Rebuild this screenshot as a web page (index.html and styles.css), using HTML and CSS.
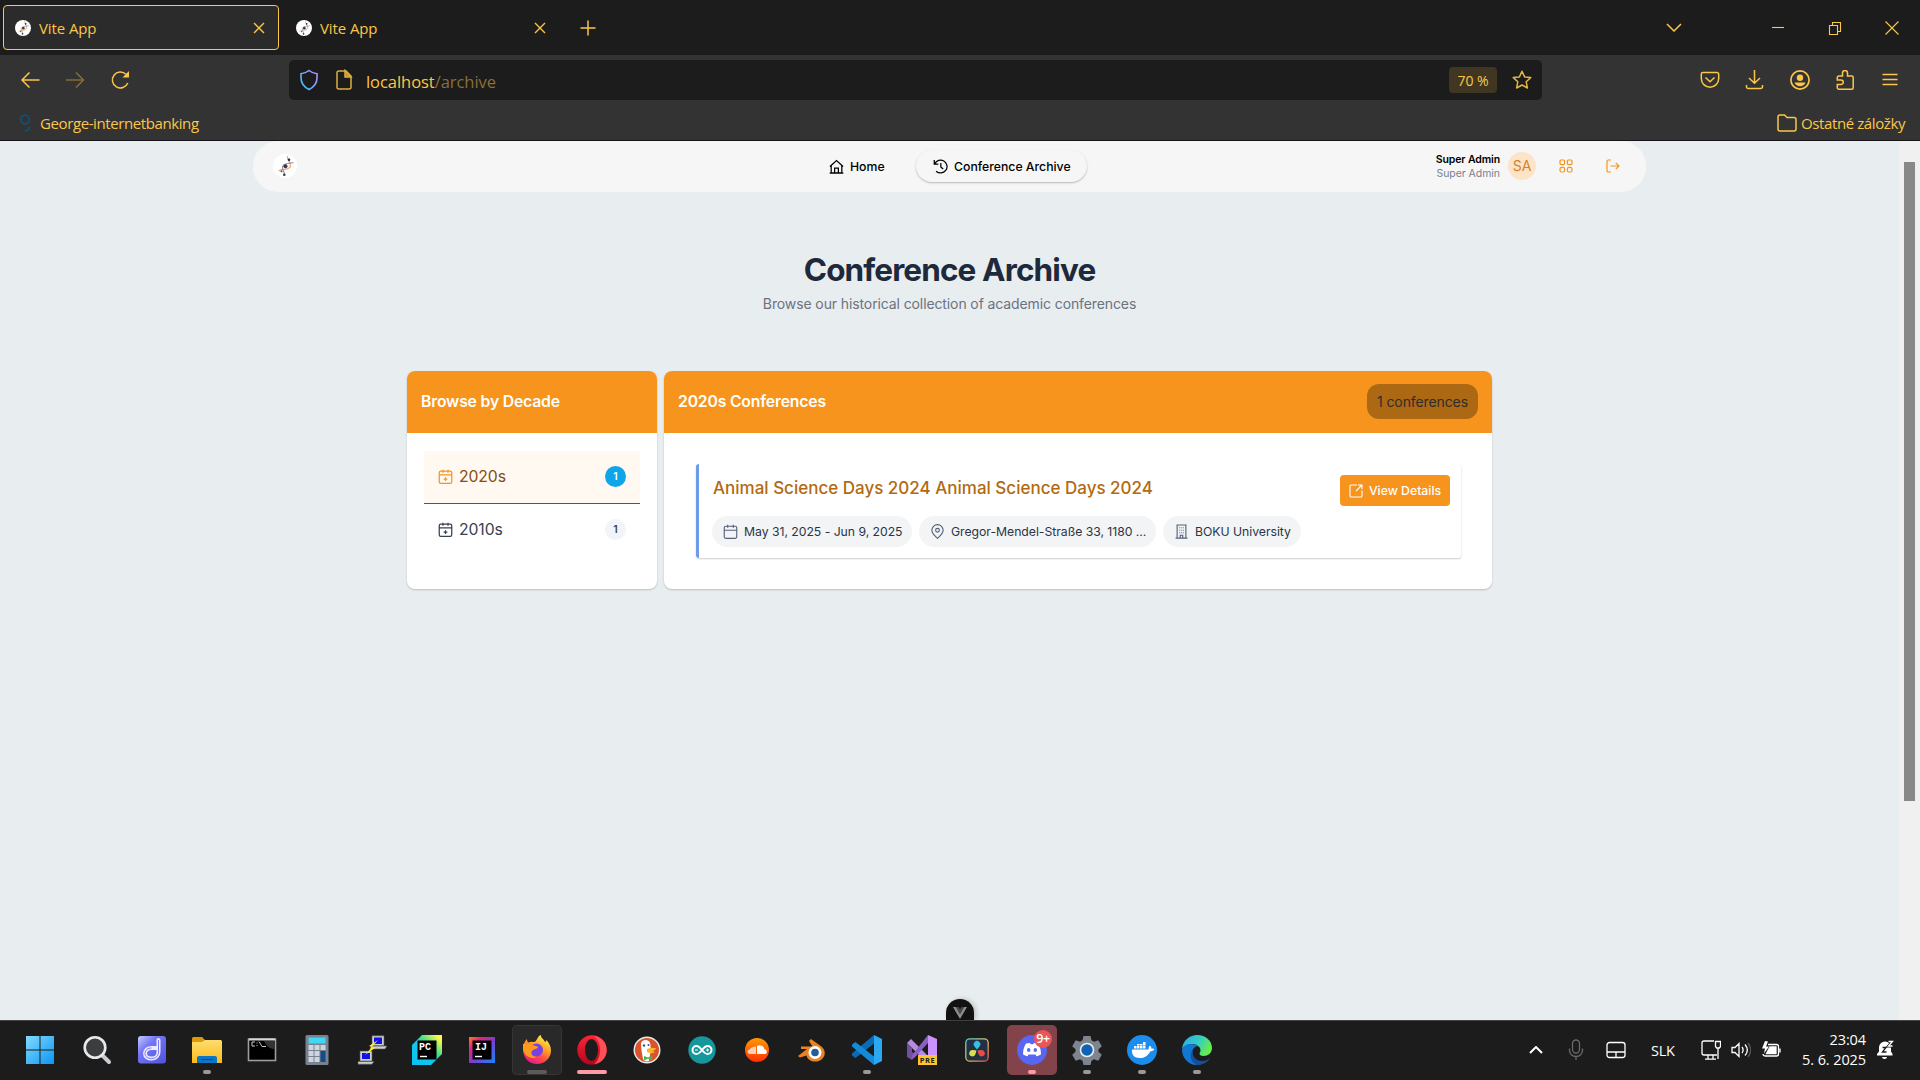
FILE: index.html
```html
<!DOCTYPE html>
<html lang="sk">
<head>
<meta charset="utf-8">
<title>Vite App</title>
<link rel="stylesheet" href="styles.css">
</head>
<body>
<svg class="defs" aria-hidden="true">
  <defs>
    <linearGradient id="shield" x1="1" y1="0" x2="0" y2="1"><stop offset="0" stop-color="#b78cff"/><stop offset=".5" stop-color="#7aa8ff"/><stop offset="1" stop-color="#1fd0f5"/></linearGradient>
    <linearGradient id="win" x1="0" y1="0" x2="1" y2="1"><stop offset="0" stop-color="#83dbfb"/><stop offset="1" stop-color="#0a95f6"/></linearGradient>
    <linearGradient id="fold" x1="0" y1="0" x2="0" y2="1"><stop offset="0" stop-color="#ffdd6e"/><stop offset="1" stop-color="#fbb91b"/></linearGradient>
    <linearGradient id="dd" x1="0" y1="0" x2="1" y2="1"><stop offset="0" stop-color="#c9ccff"/><stop offset=".35" stop-color="#7476f5"/><stop offset="1" stop-color="#4f51dc"/></linearGradient>
    <linearGradient id="pc" x1="0" y1="1" x2="1" y2="0"><stop offset="0" stop-color="#07c3f2"/><stop offset=".45" stop-color="#12c8ea"/><stop offset=".6" stop-color="#3ddc8e"/><stop offset=".9" stop-color="#fcf84a"/></linearGradient>
    <linearGradient id="ij" x1="0" y1="0" x2="1" y2="1"><stop offset="0" stop-color="#fc801d"/><stop offset=".25" stop-color="#e0257c"/><stop offset=".55" stop-color="#7a3fd0"/><stop offset="1" stop-color="#1487ff"/></linearGradient>
    <linearGradient id="ff" x1=".8" y1="0" x2=".3" y2="1"><stop offset="0" stop-color="#fff44f"/><stop offset=".4" stop-color="#ffa428"/><stop offset=".7" stop-color="#ff4a45"/><stop offset="1" stop-color="#e5168a"/></linearGradient>
    <linearGradient id="op" x1="0" y1="0" x2="0" y2="1"><stop offset="0" stop-color="#ff2338"/><stop offset="1" stop-color="#b3061c"/></linearGradient>
    <linearGradient id="sc" x1="0" y1="0" x2="0" y2="1"><stop offset="0" stop-color="#ff9a00"/><stop offset="1" stop-color="#ff2f00"/></linearGradient>
    <linearGradient id="edge" x1="0" y1="0" x2="1" y2=".4"><stop offset="0" stop-color="#2aa8e8"/><stop offset=".6" stop-color="#36cfc0"/><stop offset="1" stop-color="#66eb4e"/></linearGradient>
    <linearGradient id="dv" x1="0" y1="0" x2="1" y2="1"><stop offset="0" stop-color="#5fc9d8"/><stop offset=".5" stop-color="#d8c060"/><stop offset="1" stop-color="#e0504a"/></linearGradient>
    <symbol id="logo" viewBox="0 0 24 24">
      <circle cx="12" cy="12" r="12" fill="#fff"/>
      <path d="M14.500 2c-1 3 3.500 6 3 10-.4 3.500-5 3-7.500 3.500-2 .3-3 .7-4.500 1.500" fill="none" stroke="#f6a573" stroke-width="1.300"/>
      <path d="M20.500 8.500c-3 1-4.500.5-6 1-3 .8-5.500 1.500-5 5 .3 2 1.500 3 2 5" fill="none" stroke="#8b93a7" stroke-width="1.200"/>
      <circle cx="12.500" cy="12.300" r="2" fill="#343c4e"/><circle cx="16" cy="5.800" r="1.300" fill="#272b35"/><circle cx="11.300" cy="20.800" r="1.300" fill="#343c4e"/><circle cx="8.500" cy="17.300" r=".9" fill="#343c4e"/>
    </symbol>
    <symbol id="calplus" viewBox="0 0 24 24"><path d="M8 1v5M16 1v5M4.500 3.500h15A2.500 2.500 0 0 1 22 6v14.500a2.500 2.500 0 0 1-2.500 2.500h-15A2.500 2.500 0 0 1 2 20.500V6a2.500 2.500 0 0 1 2.500-2.500zM2 9.500h20M12 13v6M9 16h6"/></symbol>
    <symbol id="x" viewBox="0 0 12 12"><path d="M1 1l10 10M11 1L1 11"/></symbol>
  </defs>
</svg>

<header class="browser">
  <div class="tabs">
    <div class="tab active"><svg class="fav"><use href="#logo"/></svg><span>Vite App</span><svg class="tx"><use href="#x"/></svg></div>
    <div class="tab"><svg class="fav"><use href="#logo"/></svg><span>Vite App</span><svg class="tx"><use href="#x"/></svg></div>
    <svg class="plus line" viewBox="0 0 16 16"><path d="M8 .5v15M.5 8h15"/></svg>
    <div class="window">
      <svg class="line chev" viewBox="0 0 16 9"><path d="M1 1l7 7 7-7"/></svg>
      <svg class="line thin" width="14" height="14" viewBox="0 0 14 14"><path d="M1 6.500h12"/></svg>
      <svg class="line thin" width="14" height="14" viewBox="0 0 14 14"><path d="M1.500 4.500h8v9h-8zM4.500 4.500v-3h8v9h-3"/></svg>
      <svg class="line thin" width="14" height="14" viewBox="0 0 14 14"><path d="M.5.5l13 13M13.500.5l-13 13"/></svg>
    </div>
  </div>
  <div class="nav">
    <div class="history">
      <svg class="line" viewBox="0 0 20 20"><path d="M19.500 10H2M9.500 2.500L2 10l7.500 7.500"/></svg>
      <svg class="line off" viewBox="0 0 20 20"><path d="M1 10h17.500M11 2.500l7.500 7.500-7.500 7.500"/></svg>
      <svg class="line" viewBox="0 0 20 20"><path d="M17.800 13a8 8 0 1 1-1.800-8.700"/><path d="M19 1v6.500H12.500z" fill="#fcc648" stroke="none"/></svg>
    </div>
    <div class="url">
      <svg viewBox="0 0 20 22"><path d="M10 1.500c2 1.600 4.500 2.700 8 3.200v4c0 5-2.500 9-8 11.800-5.500-2.800-8-6.800-8-11.800v-4c3.500-.5 6-1.600 8-3.200z" fill="none" stroke="url(#shield)" stroke-width="1.600"/></svg>
      <svg class="line doc" viewBox="0 0 20 22"><path d="M5 2h7l5 5v11a2 2 0 0 1-2 2H5a2 2 0 0 1-2-2V4a2 2 0 0 1 2-2z"/><path d="M11 1.500V8h6z" fill="#d9a83c"/></svg>
      <span class="addr">localhost<i>/archive</i></span>
      <span class="zoomlvl">70 %</span>
      <svg class="line star" viewBox="0 0 20 20"><path d="M10 1.200l2.600 5.700 6.100.7-4.500 4.200 1.200 6.200L10 15l-5.400 3 1.200-6.200-4.500-4.200 6.100-.7z" stroke-linejoin="round"/></svg>
    </div>
    <div class="tools">
      <svg class="line" viewBox="0 0 20 20"><path d="M3 2.500h14a1.700 1.700 0 0 1 1.700 1.700V8.500a8.700 8.700 0 0 1-17.400 0V4.200A1.700 1.700 0 0 1 3 2.500zM5.500 7.500L10 11.700l4.500-4.200"/></svg>
      <svg class="line" viewBox="0 0 20 20"><path d="M9.500 0v13M4 8l5.500 5.300L15 8M1.500 15v1.700a1.800 1.800 0 0 0 1.800 1.800h12.400a1.800 1.800 0 0 0 1.800-1.800V15"/></svg>
      <svg class="line" viewBox="0 0 20 20"><circle cx="10" cy="10" r="9.100" stroke-width="1.700"/><g fill="#fcc648" stroke="none"><circle cx="10" cy="7.700" r="3.200"/><path d="M4.500 12.500h11c-1 2.500-3 3.700-5.500 3.700s-4.500-1.200-5.500-3.700z"/></g></svg>
      <svg class="line" viewBox="0 0 20 20"><path d="M7.500 6V3a2.500 2.500 0 0 1 5 0v3h4.200a1.500 1.500 0 0 1 1.500 1.500v10.200a1.500 1.500 0 0 1-1.500 1.500H3.800a1.500 1.500 0 0 1-1.500-1.500v-3.200H6a2 2 0 0 0 0-4.500H2.300V7.500A1.500 1.500 0 0 1 3.800 6z"/></svg>
      <svg class="line thin" viewBox="0 0 20 20"><path d="M2.500 4.500h15M2.500 9.500h15M2.500 14.500h15" stroke-width="1.300"/></svg>
    </div>
  </div>
  <div class="bookmarks">
    <svg class="george" viewBox="0 0 12 18"><circle cx="6" cy="5.500" r="4.300"/><path d="M10.300 13c0 2.300-1.500 4-4.500 4"/></svg>
    <span class="bm1">George-internetbanking</span>
    <svg class="line folder" viewBox="0 0 20 18"><path d="M3 1h4.500l2.500 2.500h7a2 2 0 0 1 2 2V15a2 2 0 0 1-2 2H3a2 2 0 0 1-2-2V3a2 2 0 0 1 2-2z"/></svg>
    <span class="bm2">Ostatné záložky</span>
  </div>
</header>

<div class="viewport">
  <div class="page">
    <nav class="site">
      <svg class="brand"><use href="#logo"/></svg>
      <a class="home"><svg viewBox="0 0 24 24"><path d="M1.500 12L12 2.500 22.500 12M3.500 10.500V22h17V10.500M1 22.500h22M9 22v-7.500h6V22"/></svg>Home</a>
      <a class="arch"><svg viewBox="0 0 24 24"><path d="M2 1.500V8h6.500M2.700 8A10.300 10.300 0 1 1 5 19.500M12.500 6.500v6.200l3.800 3.300"/></svg>Conference Archive</a>
      <div class="who"><b>Super Admin</b><span>Super Admin</span></div>
      <span class="avatar">SA</span>
      <svg class="act" viewBox="0 0 14 14"><rect x="1" y="1" width="4.600" height="4.600" rx="1"/><rect x="8.400" y="1" width="4.600" height="4.600" rx="1"/><rect x="1" y="8.400" width="4.600" height="4.600" rx="1.500"/><rect x="8.400" y="8.400" width="4.600" height="4.600" rx="1.500"/></svg>
      <svg class="act out" viewBox="0 0 14 14"><path d="M5 1H2.300A1.300 1.300 0 0 0 1 2.300v9.400A1.300 1.300 0 0 0 2.300 13H5M4.500 7h8.500M9.800 3.800L13 7l-3.200 3.200"/></svg>
    </nav>
    <h1>Conference Archive</h1>
    <p class="sub">Browse our historical collection of academic conferences</p>
    <main class="cols">
      <section class="card decades">
        <div class="head"><span>Browse by Decade</span></div>
        <div class="list">
          <div class="decade on"><svg><use href="#calplus"/></svg><span>2020s</span><em>1</em></div>
          <div class="decade"><svg><use href="#calplus"/></svg><span>2010s</span><em>1</em></div>
        </div>
      </section>
      <section class="card confs">
        <div class="head"><span>2020s Conferences</span><small>1 conferences</small></div>
        <article class="conf">
          <div class="top"><h2>Animal Science Days 2024 Animal Science Days 2024</h2>
            <a class="view"><svg viewBox="0 0 14 14"><path d="M8 1H2.300A1.300 1.300 0 0 0 1 2.300v9.400A1.300 1.300 0 0 0 2.300 13h9.400a1.300 1.300 0 0 0 1.300-1.300V6.500M9 1h4v4M13 1L7 7"/></svg>View Details</a></div>
          <div class="chips">
            <span class="c1"><svg viewBox="0 0 24 24"><path d="M7.500 1v5M16.500 1v5M4.500 3.500h15A2.500 2.500 0 0 1 22 6v14.500a2.500 2.500 0 0 1-2.500 2.500h-15A2.500 2.500 0 0 1 2 20.500V6a2.500 2.500 0 0 1 2.500-2.500zM2 10h20"/></svg>May 31, 2025 - Jun 9, 2025</span>
            <span class="c2"><svg viewBox="0 0 24 24"><path d="M12 23c-3-3-9-7.500-9-13a9 9 0 0 1 18 0c0 5.500-6 10-9 13z"/><circle cx="12" cy="10" r="3"/></svg>Gregor-Mendel-Straße 33, 1180 ...</span>
            <span class="c3"><svg viewBox="0 0 24 24"><path d="M4 1.500h16M5 2v20.500M19 2v20.500M2.500 22.500h19M10 22v-4h4v4M8.500 6h1.500M14 6h1.500M8.500 10h1.500M14 10h1.500M8.500 14h1.500M14 14h1.500M11.500 6h1M11.500 10h1M11.500 14h1"/></svg>BOKU University</span>
          </div>
        </article>
      </section>
    </main>
    <div class="vue"><svg viewBox="0 0 14 12"><path d="M0 0h3l4 7 4-7h3L7 12z" fill="#8d8d8d"/><path d="M3 0h2.700L7 2.400 8.300 0H11L7 7z" fill="#4a4a4a"/></svg></div>
  </div>
  <div class="scroll"><div class="thumb"></div></div>
</div>

<footer class="taskbar">
  <div class="apps">
    <div class="app start"><svg viewBox="0 0 30 30"><path d="M1 1h13.500v13.500H1zM15.500 1H29v13.500H15.500zM1 15.500h13.500V29H1zM15.500 15.500H29V29H15.500z" fill="url(#win)"/></svg></div>
    <div class="app"><svg viewBox="0 0 30 30"><path d="M20 20l7 7" stroke="#c9ccd0" stroke-width="4" stroke-linecap="round"/><circle cx="13" cy="12.500" r="10.300" fill="#3c3d3f" stroke="#e8e9eb" stroke-width="2.600"/></svg></div>
    <div class="app"><svg viewBox="0 0 30 30"><rect x="1" y="1" width="28" height="27.500" rx="3" fill="url(#dd)"/><path d="M21.500 5v12c0 4-3 6.500-7 6.500-3.500 0-6.500-1.500-6.500-5s3-5.500 6.500-5.500h7" fill="none" stroke="#eceaff" stroke-width="4" stroke-linecap="round"/><path d="M21.500 5v12c0 4-3 6.500-7 6.500-3.500 0-6.500-1.500-6.500-5s3-5.500 6.500-5.500" fill="none" stroke="#7a78f2" stroke-width="1"/></svg></div>
    <div class="app run"><svg viewBox="0 0 30 30"><path d="M0 3.500A1.500 1.500 0 0 1 1.500 2H10l3 3v5H0z" fill="#dc9a0a"/><path d="M0 7h10l3-2h15.500A1.500 1.500 0 0 1 30 6.500V28H0z" fill="url(#fold)"/><path d="M5 28v-5a2 2 0 0 1 2-2h16a2 2 0 0 1 2 2v5z" fill="#0c76c4"/><path d="M9 24.500h12" stroke="#084c84"/></svg></div>
    <div class="app"><svg viewBox="0 0 30 30"><rect x="1.500" y="4" width="27" height="21.500" fill="#000" stroke="#9c9ea1" stroke-width="1.600"/><path d="M2 4.500h26" stroke="#d7d9db" stroke-width="2"/><path d="M17 6h11v8c-5 0-8-2-11-8z" fill="#333"/><path d="M8 7H5v4h3M10 7.500v1M10 10v1M12 6.500l3 5M15 11.500h4" stroke="#c9c9c9" fill="none"/></svg></div>
    <div class="app"><svg viewBox="0 0 30 30"><rect x="3.500" y="0" width="23" height="30" rx="1.500" fill="#79838d"/><rect x="6.500" y="2.500" width="17" height="6" fill="#41d6f4"/><path d="M6.500 10h5v5h-5zM12.500 10h5v5h-5zM18.500 10h5v5h-5zM6.500 16h5v5h-5zM12.500 16h5v5h-5zM6.500 22h5v5h-5zM12.500 22h5v5h-5z" fill="#ccd6e0"/><path d="M18.500 16h5v11h-5z" fill="#174a87"/></svg></div>
    <div class="app"><svg viewBox="0 0 30 30"><g fill="#cfcfcf" stroke="#555" stroke-width=".6"><path d="M15 .8h12v10H15zM14 11h16l-2 3H13zM3 16h12v10H3zM1 26.500h16l-2 2.700H1z"/></g><path d="M17 2.500h8v6.500h-8zM5 18h8v6H5z" fill="#1212e8"/><path d="M21 5l-9 6 3 1-7 8 10-7-3-1z" fill="#ffef1a"/></svg></div>
    <div class="app"><svg viewBox="0 0 30 30"><path d="M0 10L10 0h20v19L19 30H0z" fill="url(#pc)"/><rect x="5.500" y="5.500" width="19" height="19" fill="#000"/><path d="M8 21.500h7" stroke="#fff" stroke-width="1.400"/><text x="7" y="14.500" class="ide">PC</text></svg></div>
    <div class="app"><svg viewBox="0 0 30 30"><rect x="2" y="2" width="26" height="26" fill="url(#ij)"/><rect x="5.500" y="5.500" width="19" height="19" fill="#000"/><path d="M8 21.500h7" stroke="#fff" stroke-width="1.400"/><text x="8" y="14.500" class="ide">IJ</text></svg></div>
    <div class="app focus"><svg viewBox="0 0 30 30"><path d="M1 14C1 8 4 5 5 4c0 2 .5 3 1.500 3.500C9 6 11 7 12 7c3 0 3-6 7-7-.5 3 3 4 4 7 1.500-.5 1.500-2 1.500-2 2.500 3 4.500 6 4.500 10.500C29 23 23 29 15 29S1 23 1 14z" fill="url(#ff)"/><circle cx="14.500" cy="15" r="6.500" fill="#7642e5"/><path d="M1 9c4 0 8 0 11 1.500 2 1 4 .5 4 2-1 2-4 1-6 3.500-2 3 1 6 5 6-6 3-13-1-14-8z" fill="#ff9a20"/></svg></div>
    <div class="app opera"><svg viewBox="0 0 30 30"><circle cx="15" cy="15" r="14.700" fill="url(#op)"/><path d="M17 1c8 1 12.700 7 12.700 14S25 28 17 29c4-3 6-8 6-14S21 4 17 1z" fill="#ff5055"/><ellipse cx="14.500" cy="15" rx="6.600" ry="11" fill="#1c1c1c"/></svg></div>
    <div class="app"><svg viewBox="0 0 30 30"><circle cx="15" cy="15" r="13.500" fill="#e8eaea"/><circle cx="15" cy="15" r="12" fill="#d9532c"/><path d="M9 9c0-4 7-6 9-1 1 2 0 4 1 6l-2 12c-3 1-5 0-6-2-1-5-2-11-2-15z" fill="#fff"/><circle cx="12" cy="10.500" r="1.200" fill="#2b5a8c"/><circle cx="16.500" cy="10" r="1" fill="#2b5a8c"/><path d="M15 14c4-2 6-1 9-1-1 3-4 3-4 3l3 1c-2 2-6 1-8 0z" fill="#fcb62b"/><path d="M12 21l4 1.500 4-2v5l-4-2-4 2z" fill="#4cb548"/></svg></div>
    <div class="app"><svg viewBox="0 0 30 30"><circle cx="15" cy="15" r="13.700" fill="#16979d"/><path d="M15 15c-2-2.500-3.500-4-5.500-4a4 4 0 0 0 0 8c2 0 3.500-1.500 5.500-4s3.500-4 5.500-4a4 4 0 0 1 0 8c-2 0-3.500-1.500-5.500-4z" fill="none" stroke="#fff" stroke-width="2"/><path d="M8 15h3M19 15h3M20.500 13.500v3" stroke="#fff"/></svg></div>
    <div class="app"><svg viewBox="0 0 30 30"><circle cx="15" cy="15" r="12" fill="url(#sc)"/><path d="M15 11c4-2 7 .5 7.300 3.300C25 14 26 19 22.500 19H15z" fill="#fff"/><path d="M14 11.500V19H8c-3.500 0-3-5 0-4.500 0-2 4-3 6-3z" fill="#ffd0b8"/></svg></div>
    <div class="app"><svg viewBox="0 0 30 30"><path d="M14 4l9 6.500c6 4 6 10 2 13.500-5 4.500-14 3-15.500-3.500L3 22.500 1 21l9-7H4v-2.500h11.500L12 6z" fill="#ea8422"/><circle cx="18" cy="17.500" r="6.500" fill="#fff"/><circle cx="18" cy="17.500" r="3.800" fill="#285c99"/></svg></div>
    <div class="app run"><svg viewBox="0 0 30 30"><path d="M22 0v8.500L3.500 23 0 20.500v-2z" fill="#0a6cb5"/><path d="M22 30v-8.500L3.500 7 0 9.500v2z" fill="#148ad8"/><path d="M22 0l8 4v22l-8 4z" fill="#2aa9f2"/></svg></div>
    <div class="app"><svg viewBox="0 0 30 30"><path d="M0 8l4-4 18 18v8L0 8z" fill="#b58ae0"/><path d="M0 8v14l5 3 5-5-5-3v-4z" fill="#70509e"/><path d="M21 0L6 19l-2 5 4-2L21 8z" fill="#8a60c0"/><path d="M21 0l9 4v22l-9 4z" fill="#cc92fb"/><path d="M11 20h19v10H11z" fill="#fdc42c"/><text x="12.800" y="27.800" class="pre" textLength="15">PRE</text></svg></div>
    <div class="app"><svg viewBox="0 0 30 30"><rect x="3.800" y="3.800" width="22.400" height="22.400" rx="4" fill="#223043" stroke="url(#dv)" stroke-width="1.300"/><path d="M15 14.500l-2.500-3a3.300 3.300 0 1 1 5 0z" fill="#35c0e8"/><path d="M14.500 15.500l-1 3.500a3.200 3.200 0 1 1-2.500-4z" fill="#d6e04a"/><path d="M15.500 15.500l1 3.500a3.200 3.200 0 1 0 2.500-4z" fill="#ee4a44"/></svg></div>
    <div class="app discord"><svg viewBox="0 0 30 30"><circle cx="15" cy="15" r="15" fill="#5866f2"/><path d="M9 8.500L13 8l.8 1.200h2.400L17 8l4 .8c2 3 3 6 3 10.500-1.500 1.200-3 1.700-4.500 2l-1-1.800h-7l-1 1.800c-1.500-.3-3-.8-4.500-2 0-4.500 1-7.500 3-10.800z" fill="#fff"/><ellipse cx="11.700" cy="15" rx="1.700" ry="2" fill="#5866f2"/><ellipse cx="18.300" cy="15" rx="1.700" ry="2" fill="#5866f2"/></svg><b class="count">9+</b></div>
    <div class="app run"><svg viewBox="0 0 30 30"><path d="M11.500 1h7l1 4.200 2.500 1.500 4.300-1.500 3.500 6-3.300 3v2.600l3.300 3-3.500 6-4.300-1.500-2.500 1.500-1 4.200h-7l-1-4.200L8 24.300l-4.300 1.500-3.500-6 3.300-3v-2.600l-3.300-3 3.500-6L8 6.700l2.500-1.500z" fill="#7d868f"/><circle cx="15" cy="15" r="6.500" fill="#0f62b4" stroke="#eee" stroke-width="1.600"/></svg></div>
    <div class="app run"><svg viewBox="0 0 30 30"><circle cx="15" cy="15" r="15" fill="#1d8ded"/><path d="M5 14.500h16.500c0-2 .5-3 1.500-3.700 1 .7 1.500 1.700 1.300 2.700 1 0 2 0 3 .7-1 1.500-2 2-4 2C21 21 17 23 13 23c-6 0-8.500-3-8-8.500z" fill="#fff"/><path d="M7 11h2.500v2.500H7zM10 11h2.500v2.500H10zM13 11h2.500v2.500H13zM16 11h2.500v2.500H16zM10 9h2.500v1.500H10zM13 9h2.500v1.500H13zM16 7h2.500v3.500H16z" fill="#fff"/></svg></div>
    <div class="app run"><svg viewBox="0 0 30 30"><path d="M0 14C1 5 8 0 15 0c9 0 15 6 15 13 0 5-4 8-8.500 8-3 0-4-1.500-4-2.500 0-1 1-1.500 1-3.500 0-3-4-6-8.500-6C6 9 2 11 0 14z" fill="url(#edge)"/><path d="M0 15c1-4 5-6 9-6 3 0 5 1 6.500 2.200C11 12 9.500 16 10.500 19.500c1 5 5 8.500 9.500 9.500-11 4-20-5-20-14z" fill="#1277d2"/><path d="M11.500 14C9 20 13 26 20 26c3 0 5.500-1 8-3-3 5-8 7-13 7C9 28 6 20 11.500 14z" fill="#134f9d"/></svg></div>
  </div>
  <div class="tray">
    <svg class="ln up" viewBox="0 0 14 8"><path d="M1 7l6-6 6 6" stroke-width="2"/></svg>
    <svg class="ln mic" viewBox="0 0 16 22"><rect x="4.500" y="1" width="7" height="13" rx="3.500"/><path d="M1.500 9.500v2a6.500 6 0 0 0 13 0v-2M8 17.500V21"/></svg>
    <svg class="ln pad" viewBox="0 0 20 18"><rect x="1" y="1.500" width="18" height="15" rx="2.500"/><path d="M1 11h18M10 11v5.500"/></svg>
    <span class="lang">SLK</span>
    <svg class="ln net" viewBox="0 0 20 20"><path d="M13 1H3a2 2 0 0 0-2 2v10a2 2 0 0 0 2 2h13M7 15v4M12 15v4M4 19.200h11M14.500 1.500h5v5l-1.200 1.500h-2.600l-1.200-1.500zM17 8v11"/></svg>
    <svg class="ln snd" viewBox="0 0 20 20"><path d="M1 7.500h3l4-4v13l-4-4H1zM11 7c1.500 2 1.500 4 0 6M14 4.500c3 3.500 3 7.500 0 11"/><path d="M17 3c3.500 4.500 3.500 9.500 0 14" stroke="#555"/></svg>
    <svg class="ln bat" viewBox="0 0 20 18"><path d="M7 3.500h8.500a2 2 0 0 1 2 2v7.500a2 2 0 0 1-2 2H4a2 2 0 0 1-2-2M19 7.500v4"/><path d="M9 6h6v6.500H5.500z" fill="#fff"/><path d="M4 0L1 7.500h3l-1 5 5-7H5l2-5z" fill="#fff" stroke="none"/></svg>
    <div class="clock"><span>23:04</span><span>5. 6. 2025</span></div>
    <svg class="bell" viewBox="0 0 18 20"><path d="M1 15.500v-1.500l2-2.500V7.500a6 6 0 0 1 12 0v4l1.500 2.500v1.500zM6 17h5a2.500 2 0 0 1-5 0z" fill="#fff"/><path d="M12.500 1.500h4L12.500 6h4" fill="none" stroke="#1c1c1c" stroke-width="2.800"/><path d="M12.500 1.500h4L12.500 6h4" fill="none" stroke="#fff" stroke-width="1.300"/><path d="M6.500 7.500H10l-3.500 4.500h4" fill="none" stroke="#1c1c1c" stroke-width="1.300"/></svg>
  </div>
</footer>
</body>
</html>
```
FILE: styles.css
```css
* { box-sizing: border-box; }
body { margin: 0; width: 1920px; height: 1080px; overflow: hidden; display: flex; flex-direction: column; font-family: Inter, sans-serif; }
svg { flex: none; display: block; }
.defs { width: 0; height: 0; position: absolute; }

/* browser chrome */
.browser { height: 141px; background: #333; border-bottom: 1px solid #17141a; color: #fcc648; font: 15px "Open Sans", sans-serif; flex: none; }
.line { fill: none; stroke: #fcc648; stroke-width: 1.5; }
.thin { stroke-width: 1.1; }
.tabs { height: 55px; background: #1c1c1c; display: flex; align-items: center; padding-left: 3px; }
.tab { width: 276px; height: 45px; border: 1px solid transparent; border-radius: 4px; display: flex; align-items: center; padding: 0 13px 0 11px; margin-right: 5px; letter-spacing: -.1px; }
.tab.active { background: #2b2b2b; border-color: #fcc648; }
.fav { width: 16px; height: 16px; margin-right: 8px; }
.tab span { flex: 1; }
.tx { width: 12px; height: 12px; stroke: #fcc648; stroke-width: 1.4; }
.plus { width: 16px; height: 16px; margin-left: 15px; }
.window { margin-left: auto; display: flex; align-items: center; padding-right: 21px; gap: 43px; }
.chev { width: 16px; height: 9px; margin-right: 46px; }
.nav { height: 50px; display: flex; align-items: center; }
.history { display: flex; gap: 25px; width: 289px; padding-left: 20px; }
.history svg, .tools svg { width: 20px; height: 20px; }
.off { opacity: .4; }
.url { width: 1253px; height: 40px; background: #1c1c1c; border-radius: 5px; display: flex; align-items: center; padding: 0 10px; }
.url svg { width: 20px; height: 22px; }
.url .doc { margin: 0 12px 0 15px; opacity: .85; }
.addr { flex: 1; font-size: 16.5px; letter-spacing: -.05px; padding-top: 2px; }
.addr i { font-style: normal; color: #8a7036; }
.zoomlvl { width: 48px; height: 26px; line-height: 27px; border-radius: 4px; background: #403622; text-align: center; font-size: 14px; }
.url .star { height: 20px; margin-left: 15px; opacity: .9; }
.tools { display: flex; gap: 25px; margin-left: 158px; }
.bookmarks { height: 35px; display: flex; align-items: center; padding: 0 15px 0 19px; letter-spacing: -.4px; }
.george { width: 12px; height: 18px; fill: none; stroke: #12507c; stroke-width: 1.7; margin-right: 9px; }
.folder { width: 20px; height: 18px; margin: 0 4px 0 auto; }

/* page */
.viewport { height: 879px; flex: none; display: flex; background: #e8edf0; }
.page { width: 1899px; display: flex; flex-direction: column; align-items: center; position: relative; }
.scroll { flex: 1; background: #f0f0f0; padding: 21px 5px 0; }
.thumb { width: 11px; height: 639px; background: #888; }
.site { width: 1393px; height: 51px; background: #f6f6f6; border-radius: 25px; display: flex; align-items: center; padding: 0 26px 1px 20px; font-size: 12.25px; font-weight: 500; color: #000; }
.brand { width: 24px; height: 24px; }
.home, .arch { display: flex; align-items: center; gap: 6px; padding-top: 1px; }
.home svg, .arch svg { width: 15px; height: 15px; fill: none; stroke: #000; stroke-width: 2; }
.home { margin-left: 532px; width: 87px; }
.arch { width: 171px; height: 32px; border-radius: 16px; padding-left: 17px; box-shadow: 0 1px 2px rgba(0,0,0,.25); }
.who { margin-left: auto; display: flex; flex-direction: column; text-align: right; font-size: 10.5px; line-height: 14px; margin-right: 8px; letter-spacing: -.05px; padding-top: 1px; }
.who b { font-weight: 600; letter-spacing: -.12px; }
.who span { color: #7a8190; font-weight: 400; }
.avatar { width: 28px; height: 28px; border-radius: 50%; background: #fde4c8; color: #d2822a; font-size: 14px; font-weight: 400; line-height: 28px; text-align: center; margin-right: 23px; }
.act { width: 14px; height: 14px; fill: none; stroke: #f7941d; stroke-width: 1.2; }
.out { margin-left: 33px; }
h1 { margin: 58px 0 0; font-size: 31.5px; line-height: 40px; font-weight: 700; letter-spacing: -.88px; color: #1e293b; }
.sub { margin: 4px 0 0; font-size: 14px; line-height: 20px; letter-spacing: -.11px; color: #6b7280; }
.cols { display: flex; gap: 7px; margin-top: 57px; }
.card { height: 218px; background: #fff; border-radius: 8px; overflow: hidden; box-shadow: 0 1px 2px rgba(0,0,0,.2); }
.decades { width: 250px; }
.confs { width: 828px; }
.head { height: 62px; background: #f7941d; color: #fff; font-size: 15.75px; font-weight: 600; letter-spacing: -.18px; display: flex; align-items: center; justify-content: space-between; padding: 0 14px 1px; }
.head small { width: 111px; height: 35px; line-height: 35px; border-radius: 12px; background: #ad6814; color: #2f2d2a; font-size: 14px; font-weight: 400; letter-spacing: -.1px; text-align: center; }
.list { padding: 18px 17px; }
.decade { height: 53px; display: flex; align-items: center; padding: 0 14px 2px; font-size: 15.75px; color: #374151; border-bottom: 1px solid transparent; letter-spacing: -.1px; }
.decade svg { width: 15px; height: 15px; fill: none; stroke: #374151; stroke-width: 2; margin-right: 6px; }
.decade.on { background: #fff9f2; border-color: #854d0e; color: #854d0e; }
.on svg { stroke: #f7941d; }
.decade em { margin-left: auto; width: 21px; height: 21px; border-radius: 50%; background: #f1f5f9; font: 600 10.5px/21px Inter, sans-serif; text-align: center; }
.on em { background: #0ea5e9; color: #fff; }
.conf { margin: 31px 31px 0 32px; height: 94px; border-left: 3px solid #6c9be8; border-radius: 3px; box-shadow: 0 1px 2px rgba(0,0,0,.2); padding: 11px 11px 0 13px; }
.top { display: flex; justify-content: space-between; }
h2 { margin: 1px 0 0 1px; font-size: 17px; line-height: 25px; font-weight: 500; color: #b26a11; }
.view { width: 110px; height: 31px; border-radius: 4px; background: #f7941d; color: #fff; font-size: 12.25px; font-weight: 500; display: flex; align-items: center; justify-content: center; gap: 6px; }
.view svg { width: 14px; height: 14px; fill: none; stroke: #fff; stroke-width: 1.1; }
.chips { display: flex; gap: 7px; margin-top: 10px; }
.chips span { height: 31px; border-radius: 16px; background: #f2f4f6; display: flex; align-items: center; gap: 6px; padding-left: 11px; font-size: 12.25px; letter-spacing: -.04px; color: #2b3544; white-space: nowrap; }
.chips svg { width: 15px; height: 15px; fill: none; stroke: #55617a; stroke-width: 1.8; }
.c1 { width: 200px; }
.c2 { width: 237px; }
.c3 { width: 138px; }
.vue { position: absolute; left: 946px; bottom: 0; width: 28px; height: 21px; border-radius: 14px 14px 0 0; background: #121212; box-shadow: 2px 0 5px rgba(0,0,0,.2); padding: 8px 7px 0; }
.vue svg { width: 14px; height: 12px; }

/* taskbar */
.taskbar { height: 60px; background: #1c1c1c; border-top: 1px solid #454545; display: flex; justify-content: space-between; }
.apps { display: flex; gap: 5px; padding: 4px 0 0 15px; }
.app { width: 50px; height: 50px; border-radius: 5px; display: flex; justify-content: center; padding-top: 10px; position: relative; }
.app > svg { width: 30px; height: 30px; }
.start { margin-right: 2px; }
.run::after, .focus::after, .opera::after, .discord::after { content: ""; position: absolute; bottom: 1px; left: 21px; width: 8px; height: 4px; border-radius: 2px; background: #999; }
.focus { background: #292929; box-shadow: inset 0 0 0 1px #363636; }
.focus::after { left: 15px; width: 20px; background: #5c5b59; }
.opera::after { left: 10px; width: 30px; background: #ff99a4; }
.discord { background: #82444a; }
.discord::after { background: #ff99a4; }
.count { position: absolute; left: 27px; top: 5px; width: 18px; height: 18px; border-radius: 50%; background: #ee5355; color: #fff; font: 600 12.5px/17px "Open Sans", sans-serif; letter-spacing: -.5px; text-align: center; }
.ide { font: 700 10px "Liberation Mono", monospace; fill: #fff; }
.pre { font: 700 7.5px "Open Sans", sans-serif; fill: #222; }
.tray { display: flex; align-items: center; padding: 0 26px 1px 0; color: #fff; font: 14.5px "Open Sans", sans-serif; }
.ln { fill: none; stroke: #fff; stroke-width: 1.3; }
.up { width: 14px; height: 8px; margin-right: 25px; }
.mic { width: 16px; height: 22px; margin-right: 22px; stroke: #6a6a6a; }
.pad { width: 20px; height: 18px; margin-right: 25px; }
.lang { width: 50px; letter-spacing: -.3px; }
.net, .snd { width: 20px; height: 20px; margin-right: 10px; }
.bat { width: 20px; height: 18px; }
.clock { width: 85px; display: flex; flex-direction: column; text-align: right; line-height: 20px; letter-spacing: -.1px; margin-right: 10px; }
.bell { width: 18px; height: 20px; }
```
